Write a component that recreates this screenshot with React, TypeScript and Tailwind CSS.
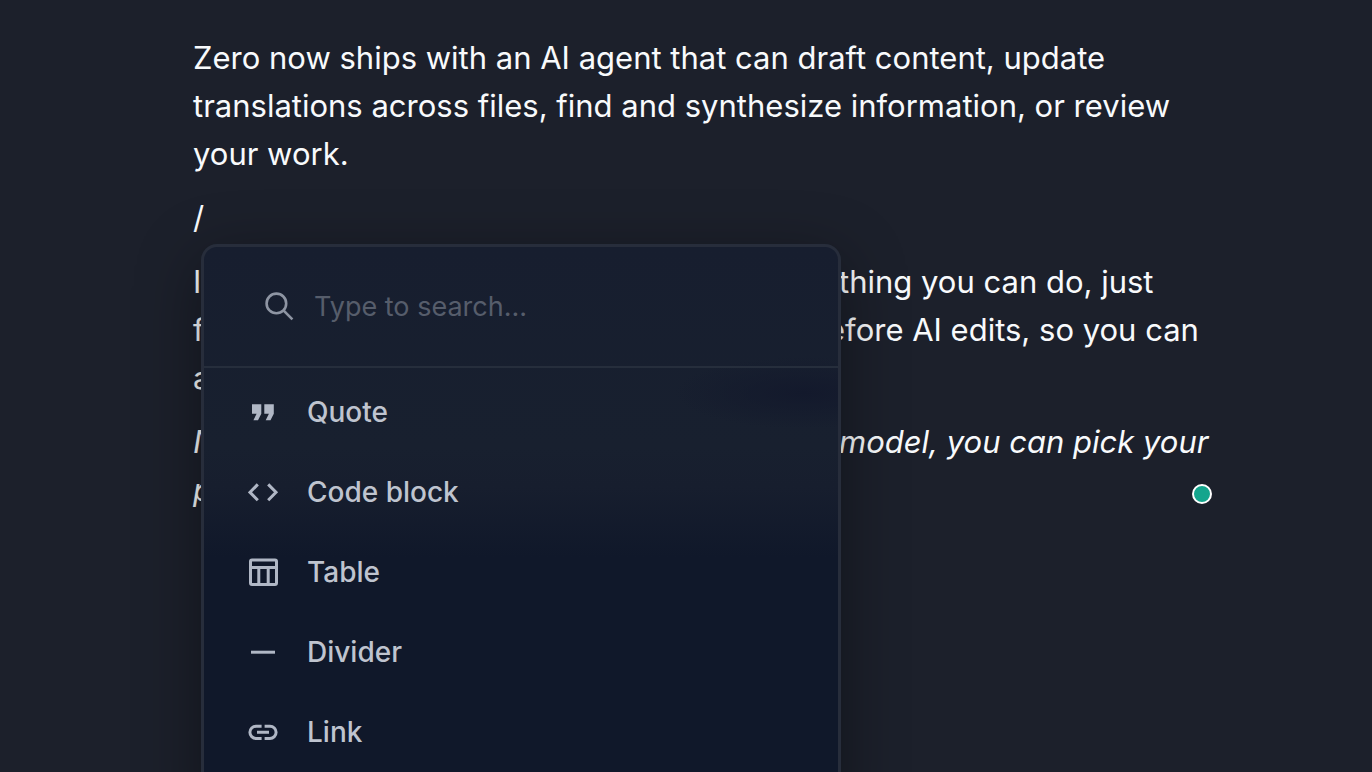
import type { ReactNode } from "react";

const para = "text-[31px] leading-[48px]";

type Item = { label: string; icon: ReactNode };

const items: Item[] = [
  {
    label: "Quote",
    icon: <path fill="currentColor" d="M4 7.3h9.3v9.4L10 23.3H5.4l3.2-6.6H4zM16.3 7.3h9.5v9.4l-3.3 6.6h-4.8l3.2-6.6h-4.6z" />,
  },
  {
    label: "Code block",
    icon: <path fill="none" stroke="currentColor" strokeWidth="3" d="M9.8 7.4 2 15.3l7.8 7.9M20.2 7.4l7.8 7.9-7.8 7.9" />,
  },
  {
    label: "Table",
    icon: (
      <g fill="none" stroke="currentColor" strokeWidth="3">
        <rect x="2.5" y="3" width="26" height="24.4" rx="1.5" />
        <path d="M2.5 10.6h26M10.8 10.6v16.8M20.2 10.6v16.8" />
      </g>
    ),
  },
  { label: "Divider", icon: <path stroke="currentColor" strokeWidth="3" d="M3 15.2h24" /> },
  {
    label: "Link",
    icon: (
      <path
        fill="none"
        stroke="currentColor"
        strokeWidth="3"
        d="M13.6 9.2H8a6.1 6.1 0 0 0 0 12.2h5.6M16.6 9.2H22a6.1 6.1 0 0 1 0 12.2h-5.4M9 15.3h12"
      />
    ),
  },
];

function SplitLine({ start, end, startWidth = "w-[646px]" }: { start: string; end?: string; startWidth?: string }) {
  return (
    <span className="flex">
      <span className={`${startWidth} shrink-0`}>{start}</span>
      <span className="whitespace-nowrap">{end}</span>
    </span>
  );
}

function SlashMenu() {
  return (
    <div className="absolute left-2 top-[50px] z-10 w-[640px] rounded-2xl border-[3px] border-[#272d3b] bg-[#10182a] bg-[radial-gradient(ellipse_130px_36px_at_600px_146px,#13192c,transparent),linear-gradient(180deg,#171e2f_0px,#18202f_200px,#171e2e_240px,#10182a_310px)] pb-10 shadow-[0_16px_64px_rgba(0,0,0,0.4)]">
      <label className="flex h-[121px] items-center gap-5 border-b-2 border-[#262e3c] px-[60px]">
        <svg viewBox="0 0 30 30" className="size-[30px] shrink-0 text-[#8e95a3]" aria-hidden="true">
          <g fill="none" stroke="currentColor" strokeWidth="2.6">
            <circle cx="12.4" cy="11.4" r="9.8" />
            <path d="m19.2 18.2 9.2 9.2" />
          </g>
        </svg>
        <input
          type="text"
          aria-label="Search blocks"
          placeholder="Type to search..."
          className="w-full bg-transparent text-[27px] leading-10 text-[#c0c5d0] outline-none placeholder:text-[#565d6b]"
        />
      </label>
      <ul className="pt-1">
        {items.map((item) => (
          <li key={item.label}>
            <button
              type="button"
              className="flex h-20 w-full items-center gap-7 px-11 text-left text-[28px] font-medium text-[#bfc4cf]"
            >
              <svg viewBox="0 0 31 31" className="size-[31px] shrink-0 text-[#b0b7c5]" aria-hidden="true">
                {item.icon}
              </svg>
              {item.label}
            </button>
          </li>
        ))}
      </ul>
    </div>
  );
}

export default function App() {
  return (
    <main className="h-screen overflow-hidden bg-[#1c202b] pl-[33px] pt-[34px] font-['Inter',sans-serif] text-[#f8fafc]">
      <article className="mx-auto flex w-full max-w-[1019px] flex-col gap-4">
        <p className={para}>
          Zero now ships with an AI agent that can draft content, update
          <br />
          translations across files, find and synthesize information, or review
          <br />
          your work.
        </p>
        <div className="relative">
          <p className={para}>/</p>
          <SlashMenu />
        </div>
        <p className={para}>
          <SplitLine start="I" end="thing you can do, just" />
          <SplitLine start="f" end="efore AI edits, so you can" startWidth="w-[634px]" />
          <SplitLine start="a" />
        </p>
        <div className="flex items-end">
          <p className="min-w-0 flex-1 text-[31px] leading-[48px] italic">
            <SplitLine start="N" end="model, you can pick your" />
            <SplitLine start="p" />
          </p>
          <span className="mb-[10px] size-5 shrink-0 rounded-full border-2 border-white bg-[#14a58d]" />
        </div>
      </article>
    </main>
  );
}
